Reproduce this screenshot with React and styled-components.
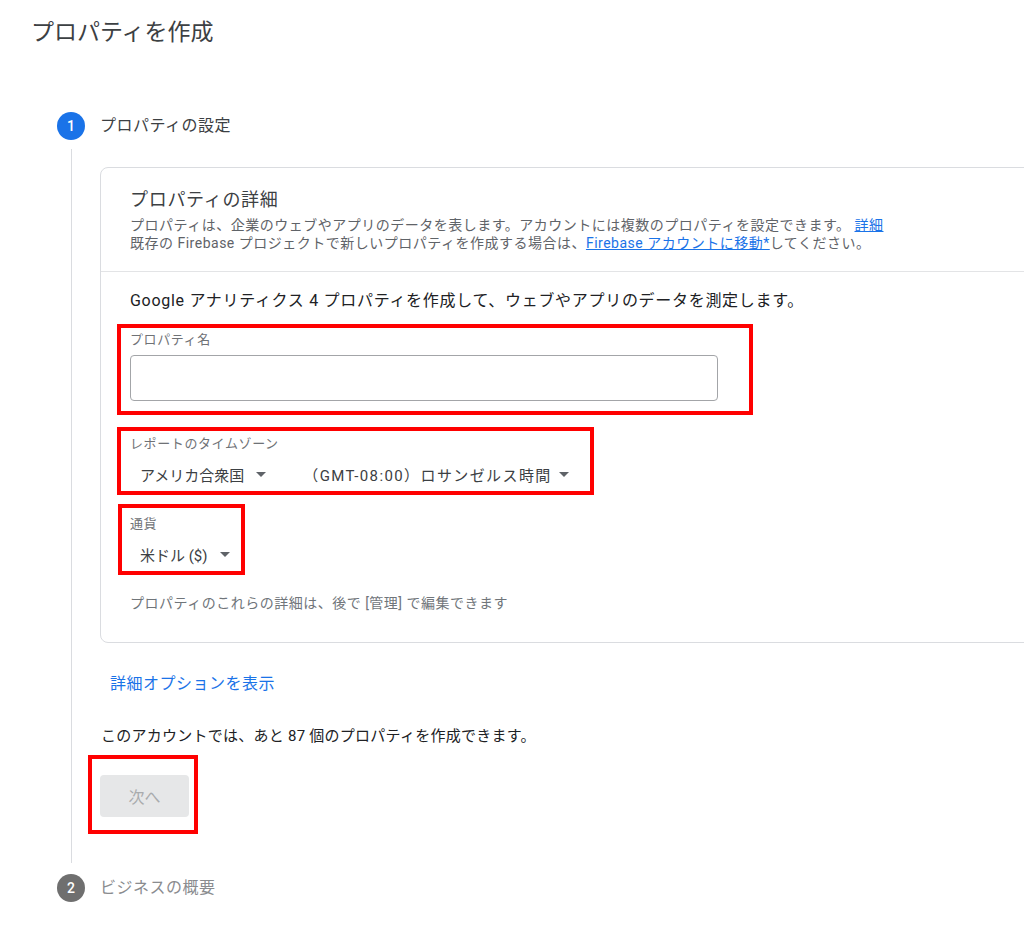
import React from 'react';
import styled, { createGlobalStyle } from 'styled-components';

const GlobalStyle = createGlobalStyle`
  html, body {
    margin: 0;
    overflow: hidden;
    background: #fff;
  }
  body {
    font-family: Roboto, "Noto Sans CJK JP", sans-serif;
    color: #202124;
  }
`;

const Page = styled.div`
  padding: 18px 0 0 31px;
`;

const Title = styled.h1`
  margin: 0;
  font-size: 23px;
  font-weight: 400;
  line-height: 30px;
  color: #3c4043;
`;

const Stepper = styled.div`
  margin: 64px 0 0 26px;
`;

const StepHeader = styled.div`
  display: flex;
  align-items: center;
  gap: 15px;
  height: 28px;
`;

const StepNumber = styled.span`
  display: flex;
  align-items: center;
  justify-content: center;
  width: 28px;
  height: 28px;
  border-radius: 50%;
  background: ${props => (props.active ? '#1a73e8' : '#6f6f6f')};
  color: #fff;
  font-size: 14px;
  font-weight: 500;
`;

const StepLabel = styled.span`
  font-size: 16px;
  letter-spacing: 0.5px;
  line-height: 22px;
  color: ${props => (props.active ? '#3c4043' : '#8a8c8f')};
`;

const StepBody = styled.div`
  display: flex;
`;

const Rail = styled.div`
  display: flex;
  justify-content: center;
  width: 28px;
  padding: 9px 0 11px;

  &::after {
    content: '';
    width: 1px;
    background: #dadce0;
  }
`;

const StepContent = styled.div`
  flex: 1;
  padding: 27px 0 40px 15px;
`;

const Card = styled.div`
  width: calc(100% + 40px);
  border: 1px solid #dadce0;
  border-radius: 8px;
`;

const CardHeader = styled.div`
  padding: 20px 30px 19px 29px;
  border-bottom: 1px solid #e3e4e6;
`;

const CardTitle = styled.h2`
  margin: 0 0 4px;
  font-size: 18px;
  letter-spacing: 0.7px;
  font-weight: 400;
  line-height: 24px;
  color: #3c4043;
`;

const Description = styled.p`
  margin: 0;
  font-size: 14px;
  letter-spacing: 0.5px;
  line-height: 18px;
  color: #5f6368;
`;

const Link = styled.a`
  color: #1a73e8;
  text-decoration: underline;
`;

const CardBody = styled.div`
  padding: 18px 29px 30px;
`;

const Lead = styled.p`
  margin: 0 0 12px;
  font-size: 16px;
  letter-spacing: 0.7px;
  line-height: 22px;
  color: #202124;
`;

const Highlight = styled.div`
  display: ${props => (props.block ? 'block' : 'inline-block')};
  width: ${props => props.width || 'auto'};
  box-sizing: border-box;
  margin: ${props => props.margin || '0'};
  padding: ${props => props.pad};
  border: 4px solid #ff0000;
  vertical-align: top;
`;

const FieldLabel = styled.div`
  font-size: 13px;
  letter-spacing: 0.6px;
  line-height: 16px;
  color: #6f7276;
`;

const TextInput = styled.input`
  display: block;
  box-sizing: border-box;
  width: 588px;
  height: 46px;
  margin-top: 7px;
  border: 1px solid #a3a5a8;
  border-radius: 4px;
  font: inherit;
`;

const SelectRow = styled.div`
  display: flex;
  gap: 17px;
  margin-top: 10px;
`;

const Select = styled.button`
  display: inline-flex;
  align-items: center;
  gap: ${props => props.gap || '12px'};
  padding: 0 10px;
  height: 24px;
  border: none;
  background: none;
  font-family: inherit;
  font-size: 15px;
  letter-spacing: ${props => props.spacing || '0'};
  color: #3c4043;
`;

const Hint = styled.p`
  margin: 19px 0 0;
  font-size: 14px;
  letter-spacing: 0.5px;
  line-height: 18px;
  color: #70757a;
`;

const MoreLink = styled.div`
  margin-top: 30px;
  padding-left: 10px;
  font-size: 16px;
  letter-spacing: 0.5px;
  line-height: 22px;
  color: #1a73e8;
`;

const Remaining = styled.p`
  margin: 31px 0 9px;
  padding-left: 1px;
  font-size: 15px;
  letter-spacing: 0.25px;
  line-height: 20px;
  color: #202124;
`;

const NextButton = styled.button`
  display: block;
  width: 89px;
  height: 42px;
  border: none;
  border-radius: 4px;
  background: #e6e7e8;
  color: #a9abad;
  font-family: inherit;
  font-size: 16px;
`;

const Caret = () => (
  <svg width="10" height="5" viewBox="0 0 10 5">
    <path d="M0 0h10L5 5z" fill="#5f6368" />
  </svg>
);

export default function App() {
  return (
    <Page>
      <GlobalStyle />
      <Title>プロパティを作成</Title>
      <Stepper>
        <StepHeader>
          <StepNumber active>1</StepNumber>
          <StepLabel active>プロパティの設定</StepLabel>
        </StepHeader>
        <StepBody>
          <Rail />
          <StepContent>
            <Card>
              <CardHeader>
                <CardTitle>プロパティの詳細</CardTitle>
                <Description>
                  プロパティは、企業のウェブやアプリのデータを表します。アカウントには複数のプロパティを設定できます。 <Link>詳細</Link>
                </Description>
                <Description>
                  既存の Firebase プロジェクトで新しいプロパティを作成する場合は、<Link>Firebase アカウントに移動*</Link>してください。
                </Description>
              </CardHeader>
              <CardBody>
                <Lead>Google アナリティクス 4 プロパティを作成して、ウェブやアプリのデータを測定します。</Lead>
                <Highlight block width="636px" margin="0 0 0 -13px" pad="4px 31px 10px 9px">
                  <FieldLabel>プロパティ名</FieldLabel>
                  <TextInput />
                </Highlight>
                <Highlight margin="12px 0 0 -13px" pad="5px 11px 5px 9px">
                  <FieldLabel>レポートのタイムゾーン</FieldLabel>
                  <SelectRow>
                    <Select>
                      アメリカ合衆国
                      <Caret />
                    </Select>
                    <Select spacing="1.4px" gap="7px">
                      （GMT-08:00）ロサンゼルス時間
                      <Caret />
                    </Select>
                  </SelectRow>
                </Highlight>
                <div>
                  <Highlight margin="9px 0 0 -12px" pad="8px 1px 5px 8px">
                    <FieldLabel>通貨</FieldLabel>
                    <SelectRow>
                      <Select>
                        米ドル ($)
                        <Caret />
                      </Select>
                    </SelectRow>
                  </Highlight>
                </div>
                <Hint>プロパティのこれらの詳細は、後で [管理] で編集できます</Hint>
              </CardBody>
            </Card>
            <MoreLink>詳細オプションを表示</MoreLink>
            <Remaining>このアカウントでは、あと 87 個のプロパティを作成できます。</Remaining>
            <Highlight margin="0 0 0 -12px" pad="16px 5px 13px 8px">
              <NextButton>次へ</NextButton>
            </Highlight>
          </StepContent>
        </StepBody>
        <StepHeader>
          <StepNumber>2</StepNumber>
          <StepLabel>ビジネスの概要</StepLabel>
        </StepHeader>
      </Stepper>
    </Page>
  );
}
